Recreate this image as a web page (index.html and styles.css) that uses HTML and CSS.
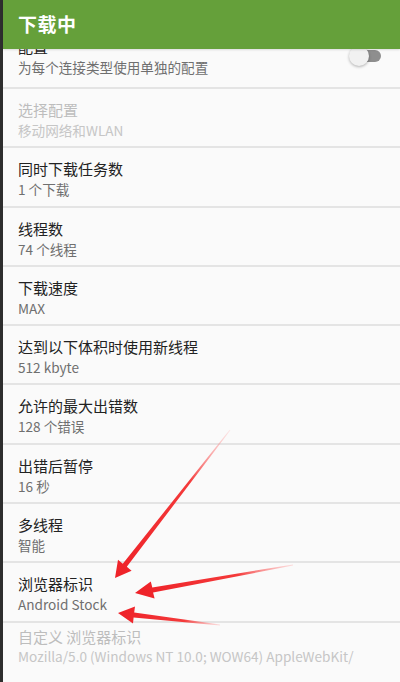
FILE: index.html
```html
<!DOCTYPE html>
<html lang="zh-CN">
<head>
<meta charset="utf-8">
<title>下载中</title>
<link rel="stylesheet" href="styles.css">
</head>
<body>
<div class="screen">
  <div class="edge"></div>
  <div class="app">
    <header class="appbar"><h1 class="appbar-title">下载中</h1></header>
    <main class="viewport">
      <ul class="prefs">
        <li class="pref pref-switch">
          <div class="pref-text">
            <div class="pref-title">配置</div>
            <div class="pref-sub">为每个连接类型使用单独的配置</div>
          </div>
          <div class="switch"><span class="switch-track"></span><span class="switch-thumb"></span></div>
        </li>
        <li class="pref disabled">
          <div class="pref-title">选择配置</div>
          <div class="pref-sub">移动网络和WLAN</div>
        </li>
        <li class="pref">
          <div class="pref-title">同时下载任务数</div>
          <div class="pref-sub">1 个下载</div>
        </li>
        <li class="pref">
          <div class="pref-title">线程数</div>
          <div class="pref-sub">74 个线程</div>
        </li>
        <li class="pref">
          <div class="pref-title">下载速度</div>
          <div class="pref-sub">MAX</div>
        </li>
        <li class="pref">
          <div class="pref-title">达到以下体积时使用新线程</div>
          <div class="pref-sub">512 kbyte</div>
        </li>
        <li class="pref">
          <div class="pref-title">允许的最大出错数</div>
          <div class="pref-sub">128 个错误</div>
        </li>
        <li class="pref">
          <div class="pref-title">出错后暂停</div>
          <div class="pref-sub">16 秒</div>
        </li>
        <li class="pref">
          <div class="pref-title">多线程</div>
          <div class="pref-sub">智能</div>
        </li>
        <li class="pref">
          <div class="pref-title">浏览器标识</div>
          <div class="pref-sub">Android Stock</div>
        </li>
        <li class="pref disabled pref-last">
          <div class="pref-title">自定义 浏览器标识</div>
          <div class="pref-sub">Mozilla/5.0 (Windows NT 10.0; WOW64) AppleWebKit/</div>
        </li>
      </ul>
    </main>
  </div>
</div>
<svg class="annot" width="400" height="682" viewBox="0 0 400 682" aria-hidden="true">
  <defs>
    <linearGradient id="g1" gradientUnits="userSpaceOnUse" x1="230" y1="430" x2="115" y2="578">
      <stop offset="0" stop-color="#ff9a9a" stop-opacity="0.2"/>
      <stop offset="0.35" stop-color="#f43a3a"/>
      <stop offset="1" stop-color="#ee2128"/>
    </linearGradient>
    <linearGradient id="g2" gradientUnits="userSpaceOnUse" x1="293" y1="565" x2="135" y2="593">
      <stop offset="0" stop-color="#ff9a9a" stop-opacity="0.3"/>
      <stop offset="0.35" stop-color="#f43a3a"/>
      <stop offset="1" stop-color="#ee2128"/>
    </linearGradient>
    <linearGradient id="g3" gradientUnits="userSpaceOnUse" x1="220" y1="625" x2="118" y2="613">
      <stop offset="0" stop-color="#ff9a9a" stop-opacity="0.3"/>
      <stop offset="0.35" stop-color="#f43a3a"/>
      <stop offset="1" stop-color="#ee2128"/>
    </linearGradient>
  </defs>
  <polygon fill="url(#g1)" points="230.4,430.3 126.8,566.8 131.6,570.8 115,578 118,559.8 122.8,563.8 229.6,429.7"/>
  <polygon fill="url(#g2)" points="293,565.6 153.1,592.4 154.6,598.6 135,593 150.8,581.4 152.3,587.4 293,564.4"/>
  <polygon fill="url(#g3)" points="220,624.4 134.2,612.4 135,606.6 118,613 133,623.4 133.6,617.4 220,625.6"/>
</svg>
</body>
</html>
```

FILE: styles.css
```css
html, body {
  margin: 0;
  padding: 0;
}

body {
  width: 400px;
  height: 682px;
  overflow: hidden;
  position: relative;
  background: #fafafa;
  font-family: "Noto Sans CJK SC", "Noto Sans", sans-serif;
}

.screen {
  display: flex;
  height: 682px;
}

.edge {
  width: 3px;
  flex: none;
  background: #2e2e2e;
}

.app {
  flex: 1;
  display: flex;
  flex-direction: column;
  min-width: 0;
  background: #fafafa;
}

.appbar {
  flex: none;
  height: 49px;
  background: #65a03a;
  display: flex;
  align-items: center;
  padding-left: 15px;
  position: relative;
  z-index: 1;
  box-shadow: 0 1px 2px rgba(0, 0, 0, 0.12);
}

.appbar-title {
  margin: 0 0 3px;
  font-size: 19px;
  font-weight: 700;
  color: #ffffff;
  letter-spacing: 0.5px;
}

.viewport {
  flex: 1;
  overflow: hidden;
}

.prefs {
  list-style: none;
  margin: -19.3px 0 0;
  padding: 0;
}

.pref {
  padding: 11px 15px 6.3px;
  border-bottom: 2px solid #e4e4e4;
}

.pref-switch {
  display: flex;
  align-items: center;
  padding-top: 7px;
  padding-right: 19px;
  padding-bottom: 10.3px;
}

.pref-switch .switch {
  margin-top: -2px;
}

.pref-text {
  flex: 1;
  min-width: 0;
}

.pref-title {
  font-size: 15px;
  line-height: 20px;
  color: #222222;
  white-space: nowrap;
}

.pref-sub {
  font-size: 13.6px;
  line-height: 20px;
  color: #6f6f6f;
  white-space: nowrap;
}

.disabled .pref-title {
  color: #bdbdbd;
}

.disabled .pref-sub {
  color: #c6c6c6;
}

.pref-last {
  padding-top: 4px;
  border-bottom: none;
}

.pref-last .pref-sub {
  line-height: 18px;
}

.switch {
  position: relative;
  width: 32px;
  height: 20px;
  flex: none;
}

.switch-track {
  position: absolute;
  left: 6px;
  right: 0;
  top: 4px;
  height: 12px;
  border-radius: 6px;
  background: #8e8e8e;
}

.switch-thumb {
  position: absolute;
  left: 0;
  top: 0;
  width: 20px;
  height: 20px;
  border-radius: 50%;
  background: #f1f1f1;
  box-shadow: 0 1px 3px rgba(0, 0, 0, 0.3);
}

.annot {
  position: absolute;
  left: 0;
  top: 0;
  pointer-events: none;
}
```
